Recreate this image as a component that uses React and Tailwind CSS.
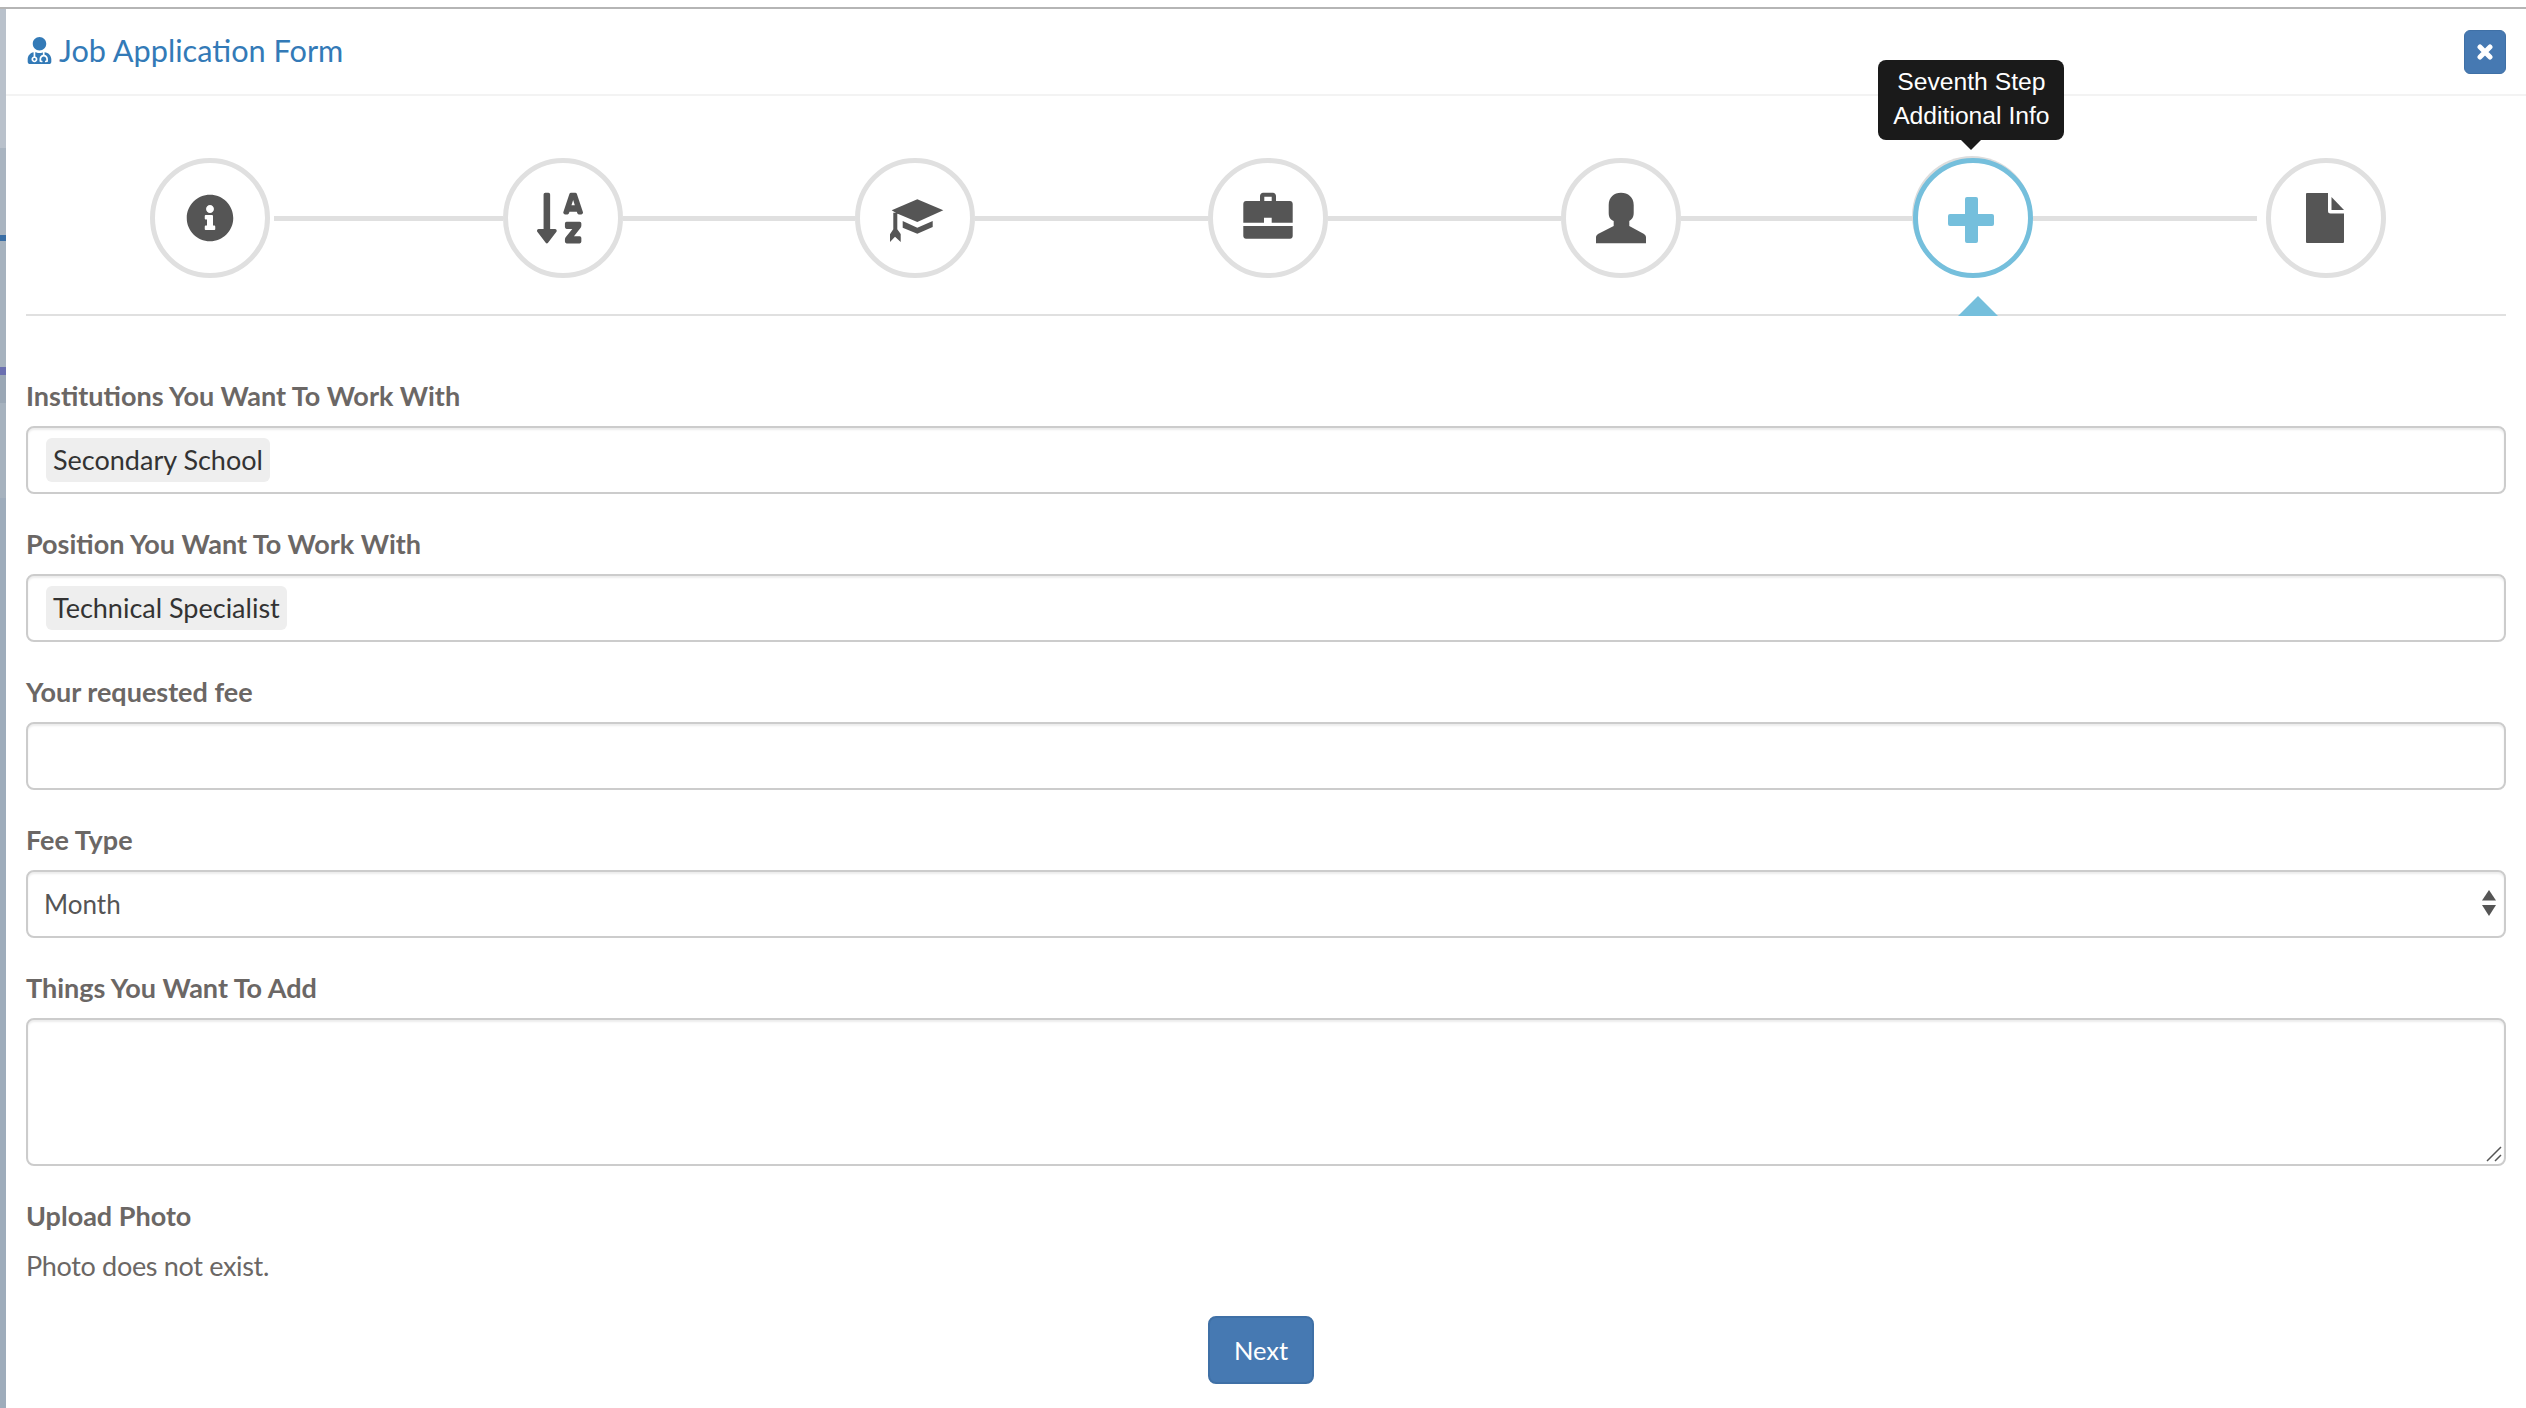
import { FaInfoCircle, FaSortAlphaDown, FaUserMd } from "react-icons/fa";

const iconBox = "20 20 80 80";

function CapIcon() {
  return (
    <svg viewBox={iconBox} className="w-[80px] h-[80px]" fill="#555">
      <path d="M36.7 52.3 62.3 41.3 88.3 52.3 62.3 64 41.5 55.2 Z" />
      <path d="M47.7 63 62.3 69.7 77.7 63V69L62.3 75.7 47.7 69.7Z" />
      <path d="M38.3 54.7H42.3V71.3L45.7 76V84L40 78.7 35 84V76.3L38.3 71.3Z" />
    </svg>
  );
}

function BriefcaseIcon() {
  return (
    <svg viewBox={iconBox} className="w-[80px] h-[80px]" fill="#555">
      <path
        fillRule="evenodd"
        d="M52 43V38C52 36 53.500 34.700 55 34.700H65C66.500 34.700 68 36 68 38V43H82C83.500 43 84.700 44.200 84.700 46V64.700H63.700V59.700H56V64.700H35.300V46C35.300 44.200 36.500 43 38 43ZM56.300 38.700V43H63.700V38.700Z"
      />
      <path d="M35.300 68H84.700V78C84.700 79.500 83.500 80.700 82 80.700H38C36.500 80.700 35.300 79.500 35.300 78Z" />
    </svg>
  );
}

function UserIcon() {
  return (
    <svg viewBox={iconBox} className="w-[80px] h-[80px]" fill="#555">
      <path d="M60 34.700C67 34.700 72.700 39 72.700 47V55C72.700 60 70 62 68.300 63V68L83 76Q85 77.500 85 79V85.300H35V79Q35 77.500 37 76L52.700 68V63C50 62 47.700 60 47.700 55V47C47.700 39 53 34.700 60 34.700Z" />
    </svg>
  );
}

function PlusIcon() {
  return (
    <svg viewBox={iconBox} className="w-[80px] h-[80px]" fill="#75bfdc">
      <path d="M54 39H63Q65 39 65 41V56H79Q81 56 81 58V66Q81 68 79 68H65V83Q65 85 63 85H54Q52 85 52 83V68H37Q35 68 35 66V58Q35 56 37 56H52V41Q52 39 54 39Z" />
    </svg>
  );
}

function FileIcon() {
  return (
    <svg viewBox={iconBox} className="w-[80px] h-[80px]" fill="#555">
      <path d="M41 35H62V53Q62 55.500 64.500 55.500H78V84Q78 85 77 85H41Q40 85 40 84V36Q40 35 41 35Z" />
      <path d="M65.500 39 78 52H65.500Z" />
    </svg>
  );
}

const steps = [
  { icon: <FaInfoCircle size={48} color="#555" /> },
  {
    icon: (
      <FaSortAlphaDown color="#555" preserveAspectRatio="none" className="w-[46px] h-[58px] mr-[5px]" />
    ),
  },
  { icon: <CapIcon /> },
  { icon: <BriefcaseIcon /> },
  { icon: <UserIcon /> },
  { icon: <PlusIcon />, active: true },
  { icon: <FileIcon /> },
];

const backdrop = [
  "h-[139px] bg-[#b9c1cb]",
  "h-[87px] bg-[#a9b4c0]",
  "h-[6px] bg-[#3a6ea5]",
  "h-[126px] bg-[#a6b2be]",
  "h-[8px] bg-[#6a6fb0]",
  "h-[28px] bg-[#9aa7b5]",
  "h-[95px] bg-[#a6b2be]",
  "flex-1 bg-[#9eacbb]",
];

const fieldBox =
  "w-full border-2 border-[#ccc] rounded-lg bg-white shadow-[inset_0_2px_2px_rgba(0,0,0,0.075)] outline-none";

function Label({ children }) {
  return <p className="text-[27px] leading-[40px] font-bold text-[#6b6765] mb-[10px]">{children}</p>;
}

function TagField({ label, tag }) {
  return (
    <div className="mb-[30px]">
      <Label>{label}</Label>
      <div className={`${fieldBox} h-[68px] pl-[18px] flex items-center`}>
        <span className="h-[44px] px-[7px] rounded-md bg-[#eee] text-[27px] leading-[44px] text-[#333]">{tag}</span>
      </div>
    </div>
  );
}

function Step({ step }) {
  return (
    <div className="relative shrink-0">
      <div
        className={`w-[120px] h-[120px] rounded-full flex items-center justify-center bg-white border-[5px] ${
          step.active ? "border-[#75bfdc] shadow-[-1px_-2px_0_0_#ddd]" : "border-[#e0e0e0]"
        }`}
      >
        {step.icon}
      </div>
      {step.active && (
        <>
          <div className="absolute left-[-35px] top-[-98px] w-[186px] h-[80px] rounded-lg bg-[#1a1a1a] z-10 text-center text-white text-[24.7px] leading-[34px] pt-[5px] font-['Liberation_Sans',sans-serif]">
            <p>Seventh Step</p>
            <p>Additional Info</p>
            <div className="absolute left-1/2 -translate-x-1/2 top-full w-0 h-0 border-x-[10px] border-x-transparent border-t-[10px] border-t-[#1a1a1a]" />
          </div>
          <div className="absolute left-[45px] top-[138px] w-0 h-0 border-x-[20px] border-x-transparent border-b-[20px] border-b-[#75bfdc]" />
        </>
      )}
    </div>
  );
}

export default function App() {
  return (
    <div className="h-[1408px] overflow-hidden bg-white font-['Lato',sans-serif] flex flex-col">
      <div className="h-[9px] shrink-0 border-b-2 border-[#b5b5b5]" />
      <div className="flex-1 flex">
        <div className="w-[6px] flex flex-col">
          {backdrop.map((cls, i) => (
            <div key={i} className={cls} />
          ))}
        </div>

        <div className="flex-1 min-w-0">
          {/* Header */}
          <div className="h-[87px] px-[20px] border-b-2 border-[#f3f3f3] flex items-center justify-between">
            <div className="flex items-center text-[#337ab7] -mt-[2px]">
              <FaUserMd size={27} />
              <h1 className="ml-[6px] text-[30.7px] leading-[40px] font-normal">Job Application Form</h1>
            </div>
            <button className="w-[42px] h-[44px] rounded-md bg-[#4679b2] border border-[#3f70a6] flex items-center justify-center">
              <svg viewBox="0 0 16 16" className="w-[16px] h-[16px]" stroke="#fff" strokeWidth="5" strokeLinecap="round">
                <path d="M3 3 13 13M13 3 3 13" />
              </svg>
            </button>
          </div>

          <div className="px-[20px]">
            {/* Wizard */}
            <div className="h-[220px] pt-[62px] pl-[124px] pr-[120px] border-b-2 border-[#e0e0e0] flex items-start">
              {steps.map((step, i) => (
                <div key={i} className={`flex items-center ${i < steps.length - 1 ? "flex-1" : ""}`}>
                  <Step step={step} />
                  {i < steps.length - 1 && (
                    <div className={`flex-1 h-[5px] bg-[#e0e0e0] ${i === 0 ? "ml-[4px]" : ""} ${i === 5 ? "mr-[9px]" : ""}`} />
                  )}
                </div>
              ))}
            </div>

            {/* Form */}
            <form className="pt-[60px]">
              <TagField label="Institutions You Want To Work With" tag="Secondary School" />
              <TagField label="Position You Want To Work With" tag="Technical Specialist" />

              <div className="mb-[30px]">
                <Label>Your requested fee</Label>
                <input className={`${fieldBox} h-[68px] px-[18px] text-[27px]`} />
              </div>

              <div className="mb-[30px]">
                <Label>Fee Type</Label>
                <div className="relative">
                  <select
                    defaultValue="Month"
                    className={`${fieldBox} h-[68px] px-[16px] text-[26px] text-[#555] appearance-none`}
                  >
                    <option>Month</option>
                    <option>Year</option>
                  </select>
                  <svg viewBox="0 0 14 26" className="absolute right-[10px] top-[20px] w-[14px] h-[26px]" fill="#555">
                    <path d="M7 0 14 10.500H0Z" />
                    <path d="M0 15H14L7 26Z" />
                  </svg>
                </div>
              </div>

              <div className="mb-[30px]">
                <Label>Things You Want To Add</Label>
                <div className="relative">
                  <textarea className={`${fieldBox} h-[148px] block resize-none px-[18px] py-[10px] text-[27px]`} />
                  <svg viewBox="0 0 16 16" className="absolute right-[4px] bottom-[4px] w-[16px] h-[16px]" stroke="#555" strokeWidth="1.5">
                    <path d="M1 15 15 1M9 15 15 9" />
                  </svg>
                </div>
              </div>

              <Label>Upload Photo</Label>
              <p className="text-[27px] leading-[40px] tracking-[-0.33px] text-[#6b6765]">Photo does not exist.</p>

              <div className="mt-[30px] flex justify-center">
                <button
                  type="button"
                  className="mr-[10px] w-[106px] h-[68px] rounded-lg bg-[#4679b2] border-2 border-[#3f70a6] text-white text-[25.500px]"
                >
                  Next
                </button>
              </div>
            </form>
          </div>
        </div>
      </div>
    </div>
  );
}
